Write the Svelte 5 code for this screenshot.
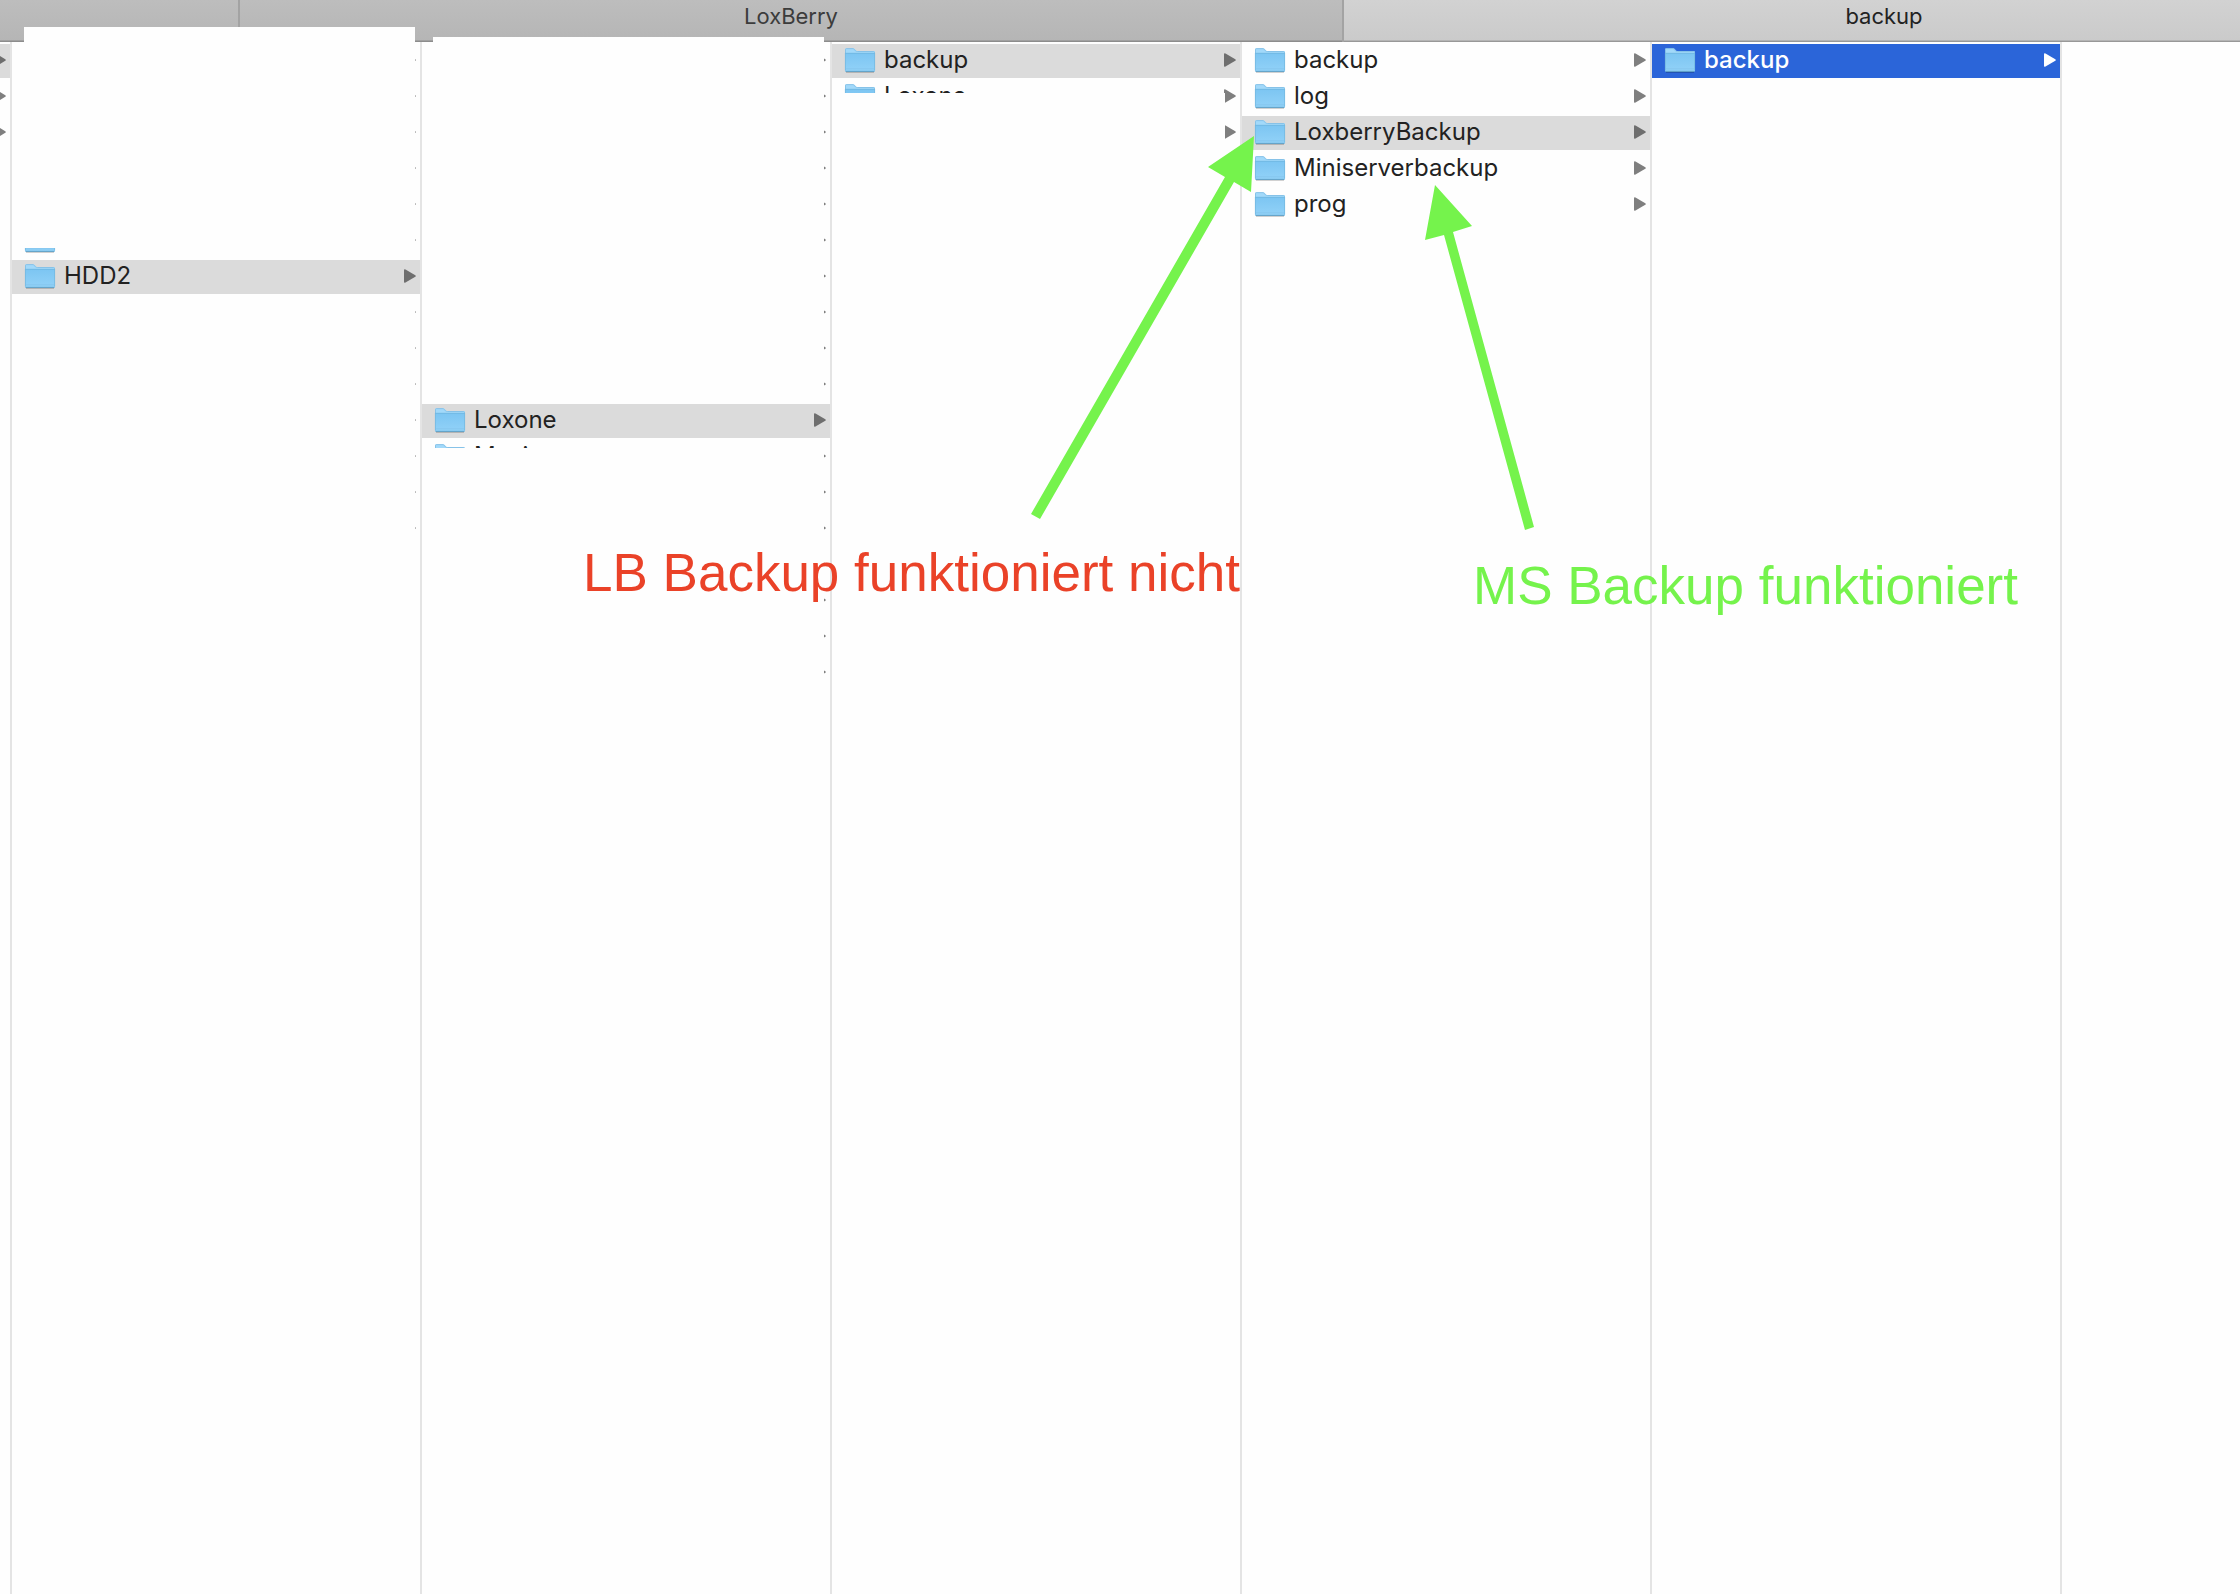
<script>
  const tabs = [
    { title: '', kind: 'edge' },
    { title: 'LoxBerry', kind: 'middle' },
    { title: 'backup', kind: 'active' }
  ]

  // fills a stretch of rows whose names are hidden
  const blank = (count) => Array.from({ length: count }, () => ({ name: '' }))

  const columns = [
    { id: 'root', rows: [{ name: '', open: true }, ...blank(2)], masks: [] },
    {
      id: 'volumes',
      rows: [...blank(5), { name: '', folder: true }, { name: 'HDD2', folder: true, open: true }, ...blank(7)],
      masks: ['volumes-top', 'volumes-bottom']
    },
    {
      id: 'hdd2',
      rows: [...blank(10), { name: 'Loxone', folder: true, open: true }, { name: 'Music', folder: true }, ...blank(6)],
      masks: ['hdd2-top', 'hdd2-bottom']
    },
    {
      id: 'loxone',
      rows: [{ name: 'backup', folder: true, open: true }, { name: 'Loxone', folder: true }, ...blank(1)],
      masks: ['loxone-bottom']
    },
    {
      id: 'backup',
      rows: [
        { name: 'backup', folder: true },
        { name: 'log', folder: true },
        { name: 'LoxberryBackup', folder: true, open: true },
        { name: 'Miniserverbackup', folder: true },
        { name: 'prog', folder: true }
      ],
      masks: []
    },
    { id: 'loxberrybackup', rows: [{ name: 'backup', folder: true, selected: true }], masks: [] }
  ]
</script>

<svg class="defs" aria-hidden="true">
  <defs>
    <linearGradient id="folder-front" x1="0" y1="0" x2="0" y2="1">
      <stop offset="0" stop-color="#7cc5f2" />
      <stop offset="1" stop-color="#92d2f8" />
    </linearGradient>
  </defs>
</svg>

<div class="finder">
  <nav class="tabs">
    {#each tabs as tab}
      <button class="tab {tab.kind}">{tab.title}</button>
    {/each}
  </nav>

  <main class="browser">
    {#each columns as column}
      <div class="column {column.id}">
        {#each column.rows as row}
          <button class="row" class:open={row.open} class:selected={row.selected}>
            {#if row.folder}
              <svg class="folder" viewBox="0 0 30 24">
                <path d="M1 24.2h28" stroke="#000" stroke-opacity=".2" stroke-width="1.4" />
                <path d="M0 22V1.5Q0 .2 1.3 .2H8.2Q9.2 .2 9.8 1L11 2.4Q11.6 3.1 12.6 3.1H28.7Q30 3.1 30 4.4V22Z" fill="#a2d9fa" />
                <path d="M.5 5V1.6Q.5 .6 1.5 .6H8.2L10.8 3Q11.4 3.5 12.4 3.5H28.6Q29.5 3.5 29.5 4.5V5" fill="none" stroke="#7fbde3" stroke-width=".8" />
                <path d="M0 5H30V22.6Q30 23.8 28.8 23.8H1.2Q0 23.8 0 22.6Z" fill="url(#folder-front)" />
                <path d="M0 5.3H30" stroke="#6fb5df" stroke-width=".8" />
                <path d="M.4 5V22.5M29.6 5V22.5" stroke="#74b7de" stroke-width=".8" />
                <path d="M.5 20.8H29.5" stroke="#80c1e8" stroke-width=".6" />
                <path d="M.6 23.4H29.4" stroke="#5f9fc5" />
              </svg>
            {/if}
            <span class="name">{row.name}</span>
            <svg class="arrow" viewBox="0 0 12 14">
              <path d="M0 1.2Q0 -.3 1.5 .5L11.3 6.2Q12.4 7 11.3 7.8L1.5 13.5Q0 14.3 0 12.8Z" />
            </svg>
          </button>
        {/each}
        {#each column.masks as mask}
          <div class="mask {mask}"></div>
        {/each}
      </div>
    {/each}
  </main>

  <svg class="arrows" aria-hidden="true">
    <path d="M1031 514L1225 177L1208 167L1254 136L1251 192L1234 182L1040 519Z" />
    <path d="M1525 530L1444 235L1425 240L1435 185L1472 226L1453 232L1534 527Z" />
  </svg>
  <p class="note failed">LB Backup funktioniert nicht</p>
  <p class="note works">MS Backup funktioniert</p>
</div>

<style>
  :global(body) {
    margin: 0;
    background: #fefefe;
  }

  .defs {
    position: absolute;
    width: 0;
    height: 0;
  }

  .finder {
    position: relative;
    display: flex;
    flex-direction: column;
    min-height: 100vh;
    overflow: hidden;
    background: #fefefe;
    font-family: Inter, 'Liberation Sans', sans-serif;
  }

  button {
    border: 0;
    margin: 0;
    padding: 0;
    font: inherit;
  }

  .tabs {
    display: flex;
    height: 42px;
  }

  .tab {
    box-sizing: border-box;
    flex-shrink: 0;
    padding-bottom: 10px;
    border-right: 2px solid #a3a3a3;
    background: linear-gradient(#bdbdbd, #b5b5b5);
    box-shadow: inset 0 -1px #8c8c8c, inset 0 -2px #a0a0a0;
    color: #3c3c3c;
    font-size: 22px;
    line-height: 28px;
  }

  .tab.edge {
    width: 240px;
  }

  .tab.middle {
    width: 1104px;
  }

  .tab.active {
    width: 1080px;
    border-right: 0;
    background: linear-gradient(#d2d2d2, #cacaca);
    box-shadow: inset 0 -1px #989898, inset 0 -2px #b4b4b4;
    color: #222;
  }

  .browser {
    display: flex;
    flex: 1;
  }

  .column {
    position: relative;
    box-sizing: border-box;
    display: flex;
    flex-direction: column;
    flex-shrink: 0;
    gap: 2px;
    width: 410px;
    padding-top: 2px;
    border-right: 2px solid #e4e4e4;
  }

  .column.root {
    width: 12px;
    align-items: flex-end;
    overflow: hidden;
  }

  .row {
    box-sizing: border-box;
    display: flex;
    align-items: center;
    height: 34px;
    padding: 0 4px 2px 13px;
    background: transparent;
    color: #222;
    font-size: 24px;
    line-height: 32px;
    text-align: left;
  }

  .row.open {
    background: #dbdbdb;
  }

  .row.selected {
    background: #2b65d9;
    color: #fff;
    font-weight: 500;
  }

  .folder {
    flex-shrink: 0;
    width: 30px;
    height: 24px;
    margin-right: 9px;
    overflow: visible;
  }

  .name {
    flex: 1;
  }

  .arrow {
    flex-shrink: 0;
    width: 12px;
    height: 14px;
    fill: #7f7f7f;
  }

  .open .arrow {
    fill: #6e6e6e;
  }

  .selected .arrow {
    fill: #fff;
  }

  /* plain boxes painted over the private folder names */
  .mask {
    position: absolute;
    left: 11px;
    width: 391px;
    background: #fefefe;
  }

  .volumes-top {
    top: -15px;
    left: 12px;
    height: 221px;
  }

  .volumes-bottom {
    top: 252px;
    left: 12px;
    height: 260px;
  }

  .hdd2-top {
    top: -5px;
    height: 367px;
  }

  .hdd2-bottom {
    top: 406px;
    height: 260px;
  }

  .loxone-bottom {
    top: 51px;
    left: 0;
    width: 393px;
    height: 100px;
  }

  .arrows {
    position: absolute;
    inset: 0;
    width: 100%;
    height: 100%;
    fill: #75f34c;
    pointer-events: none;
  }

  .note {
    position: absolute;
    margin: 0;
    font-family: 'Liberation Sans', Arial, sans-serif;
    font-size: 53px;
    line-height: 60px;
    white-space: nowrap;
  }

  .note.failed {
    top: 543px;
    left: 583px;
    color: #ea4228;
  }

  .note.works {
    top: 556px;
    left: 1473px;
    color: #75f34c;
  }
</style>
